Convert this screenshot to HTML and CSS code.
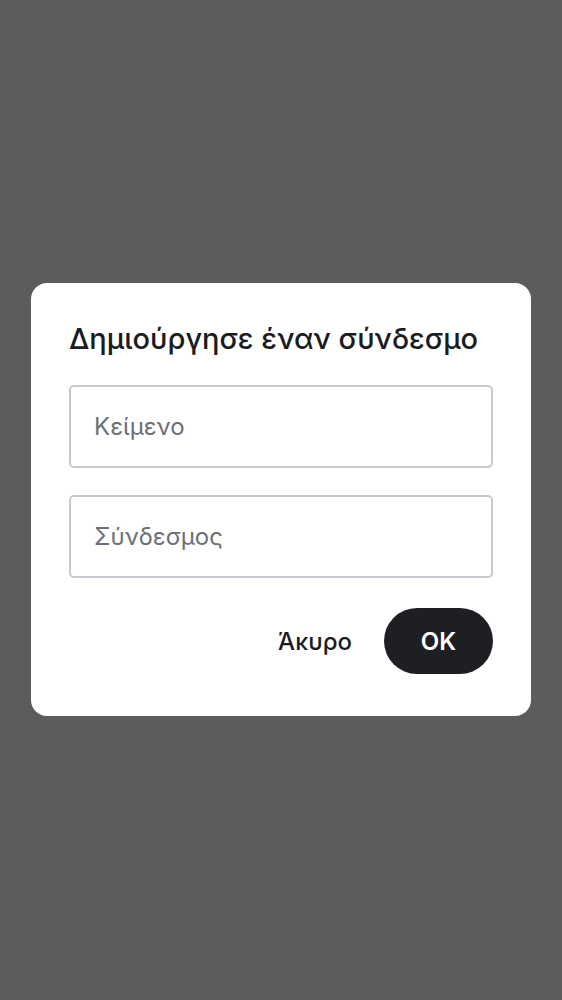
FILE: index.html
```html
<!DOCTYPE html>
<html lang="el">
<head>
<meta charset="utf-8">
<link rel="stylesheet" href="styles.css">
</head>
<body>
<div class="overlay">
  <div class="dialog">
    <h1 class="title">Δημιούργησε έναν σύνδεσμο</h1>
    <div class="field">Κείμενο</div>
    <div class="field">Σύνδεσμος</div>
    <div class="actions">
      <button class="btn-text">Άκυρο</button>
      <button class="btn-primary">OK</button>
    </div>
  </div>
</div>
</body>
</html>
```
FILE: styles.css
```css
html, body {
  margin: 0;
  padding: 0;
  height: 100%;
}
body {
  background: #5c5c5c;
  font-family: Inter, "Noto Sans", sans-serif;
}
.overlay {
  height: 1000px;
  display: flex;
  align-items: center;
  justify-content: center;
}
.dialog {
  width: 500px;
  height: 433px;
  box-sizing: border-box;
  background: #ffffff;
  border-radius: 16px;
  padding: 36px 38px 42px;
  margin-top: -1px;
}
.title {
  margin: 0 0 26px;
  font-size: 29px;
  font-weight: 500;
  color: #1b1c1f;
  line-height: 40px;
  letter-spacing: 0;
}
.field {
  height: 83px;
  box-sizing: border-box;
  border: 2px solid #c6c9cf;
  border-radius: 5px;
  padding: 0 23px;
  display: flex;
  align-items: center;
  font-size: 24px;
  color: #6b7078;
  margin-bottom: 27px;
}
.actions {
  display: flex;
  justify-content: flex-end;
  align-items: center;
  gap: 32px;
  margin-top: 30px;
  height: 66px;
}
.btn-text {
  background: none;
  border: none;
  font-family: inherit;
  font-size: 24px;
  font-weight: 500;
  color: #1b1c1f;
  padding: 0;
}
.btn-primary {
  width: 109px;
  height: 66px;
  border: none;
  border-radius: 33px;
  background: #1e1f23;
  color: #ffffff;
  font-family: inherit;
  font-size: 24px;
  font-weight: 600;
}
```
